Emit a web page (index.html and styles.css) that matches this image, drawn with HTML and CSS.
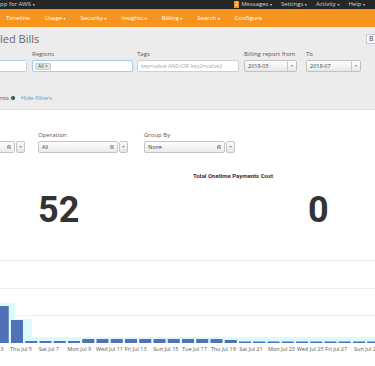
FILE: index.html
```html
<!DOCTYPE html>
<html>
<head>
<meta charset="utf-8">
<link rel="stylesheet" href="styles.css">
</head>
<body>
<div class="topbar">
  <span class="brand">pp for AWS <span class="caret">▾</span></span>
  <div class="topmenu">
    <span class="badge">2</span>
    <span>Messages <span class="caret">▾</span></span>
    <span>Settings <span class="caret">▾</span></span>
    <span>Activity <span class="caret">▾</span></span>
    <span>Help <span class="caret">▾</span></span>
  </div>
</div>
<nav class="mainnav">
  <span>Timeline</span>
  <span>Usage <span class="caret">▾</span></span>
  <span>Security <span class="caret">▾</span></span>
  <span>Insights <span class="caret">▾</span></span>
  <span>Billing <span class="caret">▾</span></span>
  <span>Search <span class="caret">▾</span></span>
  <span>Configure</span>
</nav>
<section class="filters">
  <div class="titlerow">
    <h1 class="title">led Bills</h1>
    <button class="bbtn">B</button>
  </div>
  <div class="fields">
    <div class="field f0"><div class="lbl">&nbsp;</div><div class="input cut"></div></div>
    <div class="field f1"><div class="lbl">Regions</div><div class="input focus"><span class="chip">All ×</span></div></div>
    <div class="field f2"><div class="lbl">Tags</div><div class="input"><span class="ph">key=value AND/OR key2=value2</span></div></div>
    <div class="field f3"><div class="lbl">Billing report from</div><div class="select"><span class="val">2018-05</span><span class="arr">▾</span></div></div>
    <div class="field f4"><div class="lbl">To</div><div class="select"><span class="val">2018-07</span><span class="arr">▾</span></div></div>
  </div>
  <div class="links">nts <span class="info">i</span> <span class="hide">Hide Filters</span></div>
</section>
<section class="controls">
  <div class="field c0"><div class="lbl">&nbsp;</div>
    <div class="combo"><div class="main cut"><span class="val"></span><svg class="clear" viewBox="0 0 10 10"><circle cx="5" cy="5" r="4.3" fill="none" stroke="#555" stroke-width="1.4"/><path d="M3.3 3.3L6.7 6.7M6.7 3.3L3.3 6.7" stroke="#555" stroke-width="1.4"/></svg></div><span class="arr">▾</span></div>
  </div>
  <div class="field c1"><div class="lbl">Operation</div>
    <div class="combo"><div class="main"><span class="val">All</span><svg class="clear" viewBox="0 0 10 10"><circle cx="5" cy="5" r="4.3" fill="none" stroke="#555" stroke-width="1.4"/><path d="M3.3 3.3L6.7 6.7M6.7 3.3L3.3 6.7" stroke="#555" stroke-width="1.4"/></svg></div><span class="arr">▾</span></div>
  </div>
  <div class="field c2"><div class="lbl">Group By</div>
    <div class="combo"><div class="main"><span class="val">None</span><svg class="clear" viewBox="0 0 10 10"><circle cx="5" cy="5" r="4.3" fill="none" stroke="#555" stroke-width="1.4"/><path d="M3.3 3.3L6.7 6.7M6.7 3.3L3.3 6.7" stroke="#555" stroke-width="1.4"/></svg></div><span class="arr">▾</span></div>
  </div>
</section>
<section class="stats">
  <div class="stat s0"><div class="slabel">&nbsp;</div><div class="num">52</div></div>
  <div class="stat s1"><div class="slabel">Total Onetime Payments Cost</div><div class="num">0</div></div>
</section>
<svg class="chart" width="375" height="116" viewBox="0 0 375 116">
  <g stroke="#eeeeee" stroke-width="1">
    <line x1="0" x2="375" y1="10.5" y2="10.5"/>
    <line x1="0" x2="375" y1="38.5" y2="38.5"/>
    <line x1="0" x2="375" y1="65.5" y2="65.5"/>
  </g>
  <g fill="#dcf9fc">
    <rect x="-4" y="53" width="19" height="40"/>
    <rect x="15" y="69" width="17" height="24"/>
    <rect x="32" y="87" width="343" height="6"/>
  </g>
  <g fill="#4f71b6">
    <rect x="-3.25" y="56" width="12" height="37"/>
    <rect x="11" y="70" width="12" height="23"/>
    <rect x="25.25" y="91" width="12" height="2"/>
    <rect x="39.5" y="91" width="12" height="2"/>
    <rect x="53.75" y="91" width="12" height="2"/>
    <rect x="68" y="91" width="12" height="2"/>
    <rect x="82.25" y="89" width="12" height="4"/>
    <rect x="96.5" y="89" width="12" height="4"/>
    <rect x="110.75" y="89" width="12" height="4"/>
    <rect x="125" y="89" width="12" height="4"/>
    <rect x="139.25" y="89" width="12" height="4"/>
    <rect x="153.5" y="89" width="12" height="4"/>
    <rect x="167.75" y="89" width="12" height="4"/>
    <rect x="182" y="89" width="12" height="4"/>
    <rect x="196.25" y="89" width="12" height="4"/>
    <rect x="210.5" y="89" width="12" height="4"/>
    <rect x="224.75" y="90" width="12" height="3"/>
    <rect x="239" y="91.5" width="12" height="1.5"/>
    <rect x="253.25" y="91.5" width="12" height="1.5"/>
    <rect x="267.5" y="91.5" width="12" height="1.5"/>
    <rect x="281.75" y="91.5" width="12" height="1.5"/>
    <rect x="296" y="91.5" width="12" height="1.5"/>
    <rect x="310.25" y="91.5" width="12" height="1.5"/>
    <rect x="324.5" y="91.5" width="12" height="1.5"/>
    <rect x="338.75" y="91.5" width="12" height="1.5"/>
    <rect x="353" y="91.5" width="12" height="1.5"/>
    <rect x="367.25" y="91.5" width="12" height="1.5"/>
  </g>
  <g class="axis" fill="#555">
    <text x="0.5" y="101">3</text>
    <text x="10" y="101">Thu Jul 5</text>
    <text x="38.7" y="101">Sat Jul 7</text>
    <text x="67.3" y="101">Mon Jul 9</text>
    <text x="96" y="101">Wed Jul 11</text>
    <text x="124.7" y="101">Fri Jul 13</text>
    <text x="153.3" y="101">Sun Jul 15</text>
    <text x="182" y="101">Tue Jul 17</text>
    <text x="210.7" y="101">Thu Jul 19</text>
    <text x="239.3" y="101">Sat Jul 21</text>
    <text x="268" y="101">Mon Jul 23</text>
    <text x="296.7" y="101">Wed Jul 25</text>
    <text x="325.3" y="101">Fri Jul 27</text>
    <text x="354" y="101">Sun Jul 2</text>
  </g>
</svg>
</body>
</html>
```
FILE: styles.css
```css
* { box-sizing: border-box; margin: 0; padding: 0; }
html, body { width: 375px; height: 366px; overflow: hidden; background: #fff; }
body { font-family: "Open Sans", "Liberation Sans", sans-serif; color: #555; }

.caret { font-family: "DejaVu Sans", sans-serif; font-size: 4px; }

.topbar {
  height: 9px; background: #262626; color: #d4d4d4;
  font-size: 6px; line-height: 9px;
  display: flex; justify-content: space-between; padding-right: 10px;
  white-space: nowrap;
}
.topmenu { display: flex; align-items: center; gap: 9px; }
.badge {
  display: inline-block; background: #f7941d; color: #fff;
  width: 5px; height: 7px; line-height: 7px; text-align: center;
  font-size: 5px; margin-right: -7px;
}

.mainnav {
  height: 18px; background: #f7941d; color: #fff;
  display: flex; align-items: center; gap: 15px; padding-left: 6px;
  font-size: 6px; white-space: nowrap;
}

.filters {
  background: #ececec; height: 83px; padding-top: 5px;
  border-bottom: 1px solid #e3e3e3;
}
.titlerow { display: flex; justify-content: space-between; align-items: center; height: 13px; }
.title { font-size: 11px; font-weight: 400; color: #666; line-height: 13px; }
.bbtn {
  width: 9px; height: 10px; border: 1px solid #c8c8c8; border-right: 0;
  border-radius: 2px 0 0 2px; background: #f8f8f8; color: #444;
  font-family: "Open Sans", sans-serif; font-size: 7px; line-height: 8px;
  text-align: left; padding-left: 2px; overflow: hidden;
}

.fields { display: flex; margin-top: 5px; }
.field { display: flex; flex-direction: column; }
.lbl { font-size: 6px; line-height: 8px; height: 8px; margin-bottom: 2px; color: #555; white-space: nowrap; }
.f0 { width: 27px; }
.f1 { width: 101px; margin-left: 5px; }
.f2 { width: 102px; margin-left: 4px; }
.f3 { width: 53px; margin-left: 5px; }
.f4 { width: 55px; margin-left: 9px; }

.input {
  height: 12px; background: #fff; border: 1px solid #cfcfcf; border-radius: 2px;
  display: flex; align-items: center; overflow: hidden;
}
.input.cut { border-left: 0; border-radius: 0 2px 2px 0; border-color: #b9d3ea; }
.input.focus { border-color: #a9cbe7; box-shadow: 0 0 1px #bcd6ee; }
.chip {
  margin-left: 2px; height: 7px; padding: 0 2px; font-size: 5px; line-height: 5px;
  background: #e6e6e6; border: 1px solid #cacaca; border-radius: 1px; color: #444;
}
.ph { font-size: 5.5px; color: #a8a8a8; padding-left: 3px; white-space: nowrap; }

.select {
  height: 12px; display: flex; border: 1px solid #c2c2c2; border-radius: 2px;
  background: linear-gradient(#fdfdfd, #e8e8e8);
}
.select .val { flex: 1; padding-left: 3px; font-size: 5.5px; line-height: 10px; color: #444; }
.select .arr, .combo .arr {
  width: 9px; border-left: 1px solid #c8c8c8; text-align: center;
  font-family: "DejaVu Sans", sans-serif; font-size: 4px; line-height: 10px; color: #777;
}

.links { margin-top: 22px; font-size: 6px; line-height: 8px; color: #555; display: flex; align-items: center; white-space: nowrap; }
.info {
  display: inline-block; width: 4px; height: 4px; border-radius: 50%;
  background: #3a3a3a; color: #fff; font-size: 3px; line-height: 4px; text-align: center;
  margin-left: 2px;
}
.hide { color: #5d9bd3; margin-left: 6px; }

.controls { display: flex; padding-top: 21px; }
.c0 { width: 25px; }
.c1 { width: 90px; margin-left: 13px; }
.c2 { width: 91px; margin-left: 16px; }
.combo { display: flex; height: 12px; }
.combo .main {
  flex: 1; display: flex; align-items: center;
  border: 1px solid #c4c4c4; border-radius: 2px;
  background: linear-gradient(#fdfdfd, #ebebeb);
}
.combo .main.cut { border-left: 0; border-radius: 0 2px 2px 0; }
.combo .val { flex: 1; padding-left: 3px; font-size: 5.5px; line-height: 10px; color: #444; }
.clear { width: 4.5px; height: 4.5px; margin-right: 3px; }
.combo .arr {
  margin-left: 1px; border: 1px solid #c4c4c4; border-radius: 2px;
  background: linear-gradient(#fbfbfb, #e6e6e6);
}

.stats { display: grid; grid-template-columns: 188px 187px; margin-top: 19px; height: 58px; }
.slabel {
  font-family: Roboto, "Liberation Sans", sans-serif; font-weight: 700;
  font-size: 6px; line-height: 8px; height: 8px; color: #333; white-space: nowrap;
}
.s1 .slabel { margin-left: 5px; }
.num {
  font-family: Roboto, "Liberation Sans", sans-serif; font-weight: 700;
  font-size: 36px; line-height: 40px; color: #333; margin-top: 10px;
}
.s0 .num { margin-left: 38px; }
.s1 .num { margin-left: 120px; }

.chart { display: block; margin-top: 20px; }
.axis { font-family: "Open Sans", "Liberation Sans", sans-serif; font-size: 5.5px; }
```
